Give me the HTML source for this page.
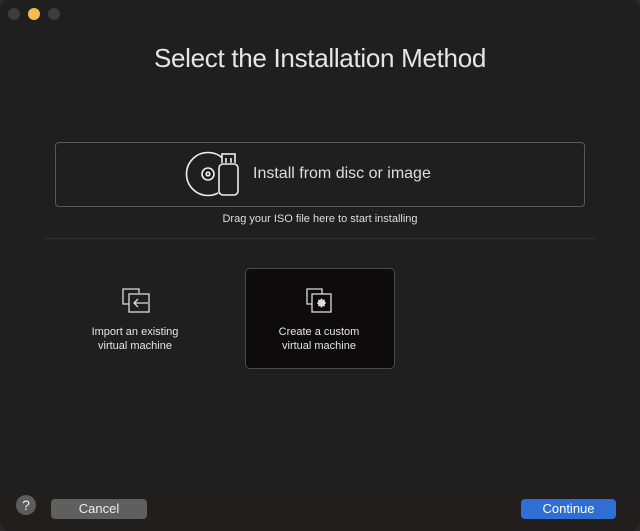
<!DOCTYPE html>
<html><head><style>
body{margin:0;width:640px;height:531px;background:#2a2a2a;font-family:"Liberation Sans",sans-serif;overflow:hidden}
.win{position:absolute;left:0;top:0;width:640px;height:531px;background:#1f1f1f;border-radius:10px;overflow:hidden}
.dot{position:absolute;top:8px;width:12px;height:12px;border-radius:50%;background:#3c3c3c}
.t{position:absolute;color:#e6e6e6;text-align:center}
.foot{position:absolute;left:0;top:488px;width:640px;height:43px;background:#221e1e}
</style></head><body><div class="win">
<div class="dot" style="left:8px"></div><div class="dot" style="left:28px;background:#f5bd4f"></div><div class="dot" style="left:48px"></div>
<div class="t" style="left:0;width:640px;top:43px;font-size:26px;letter-spacing:-0.3px">Select the Installation Method</div>
<div style="position:absolute;left:55px;top:142px;width:528px;height:63px;border:1px solid #5a5a5a;border-radius:4px"></div>
<svg style="position:absolute;left:184px;top:150px" width="58" height="48" viewBox="0 0 58 48" fill="none" stroke="#eee" stroke-width="1.6">
<circle cx="24" cy="24" r="21.5"/><circle cx="24" cy="24" r="6"/><circle cx="24" cy="24" r="1.8"/>
<rect x="38" y="4" width="13" height="12" fill="#1f1f1f"/><path d="M42 8v5M47 8v5"/><rect x="35" y="14" width="19" height="31" rx="4" fill="#1f1f1f" stroke-width="2.5" stroke="#1f1f1f"/><rect x="35" y="14" width="19" height="31" rx="4" fill="#1f1f1f"/></svg>
<div class="t" style="left:253px;top:165px;font-size:16px;color:#ddd">Install from disc or image</div>
<div class="t" style="left:0;width:640px;top:213px;font-size:11px;color:#ddd">Drag your ISO file here to start installing</div>
<div style="position:absolute;left:45px;top:238px;width:550px;height:1px;background:#333"></div>
<svg style="position:absolute;left:120px;top:286px" width="32" height="28" viewBox="0 0 32 28" fill="none" stroke="#ddd" stroke-width="1.3">
<path d="M9 18H3V3h16v4"/><rect x="9" y="8" width="20" height="18" fill="none"/><path d="M28 17h-14M18 13l-4 4 4 4"/></svg>
<div class="t" style="left:70px;width:130px;top:325px;font-size:11px;line-height:14px">Import an existing<br>virtual machine</div>
<div style="position:absolute;left:245px;top:268px;width:148px;height:99px;border:1px solid #4a4a55;border-radius:5px;background:#0d0b0b"></div>
<svg style="position:absolute;left:305px;top:287px" width="30" height="28" viewBox="0 0 30 28" fill="none" stroke="#ddd" stroke-width="1.3">
<path d="M7 17H2V2h15v5"/><rect x="7" y="7" width="19" height="18"/><circle cx="16.5" cy="16" r="3" fill="#ddd"/><path d="M16.5 11.5v9M12 16h9M13.3 12.8l6.4 6.4M19.7 12.8l-6.4 6.4"/></svg>
<div class="t" style="left:245px;width:148px;top:325px;font-size:11px;line-height:14px">Create a custom<br>virtual machine</div>
<div class="foot"></div>
<div style="position:absolute;left:16px;top:495px;width:20px;height:20px;border-radius:50%;background:#5c5c5c;color:#eee;font-size:14px;text-align:center;line-height:20px">?</div>
<div style="position:absolute;left:51px;top:499px;width:96px;height:20px;border-radius:4px;background:#5f5f5f;color:#eee;font-size:13px;text-align:center;line-height:20px">Cancel</div>
<div style="position:absolute;left:521px;top:499px;width:95px;height:20px;border-radius:4px;background:#2f6fd3;color:#fff;font-size:13px;text-align:center;line-height:20px">Continue</div>
</div></body></html>
